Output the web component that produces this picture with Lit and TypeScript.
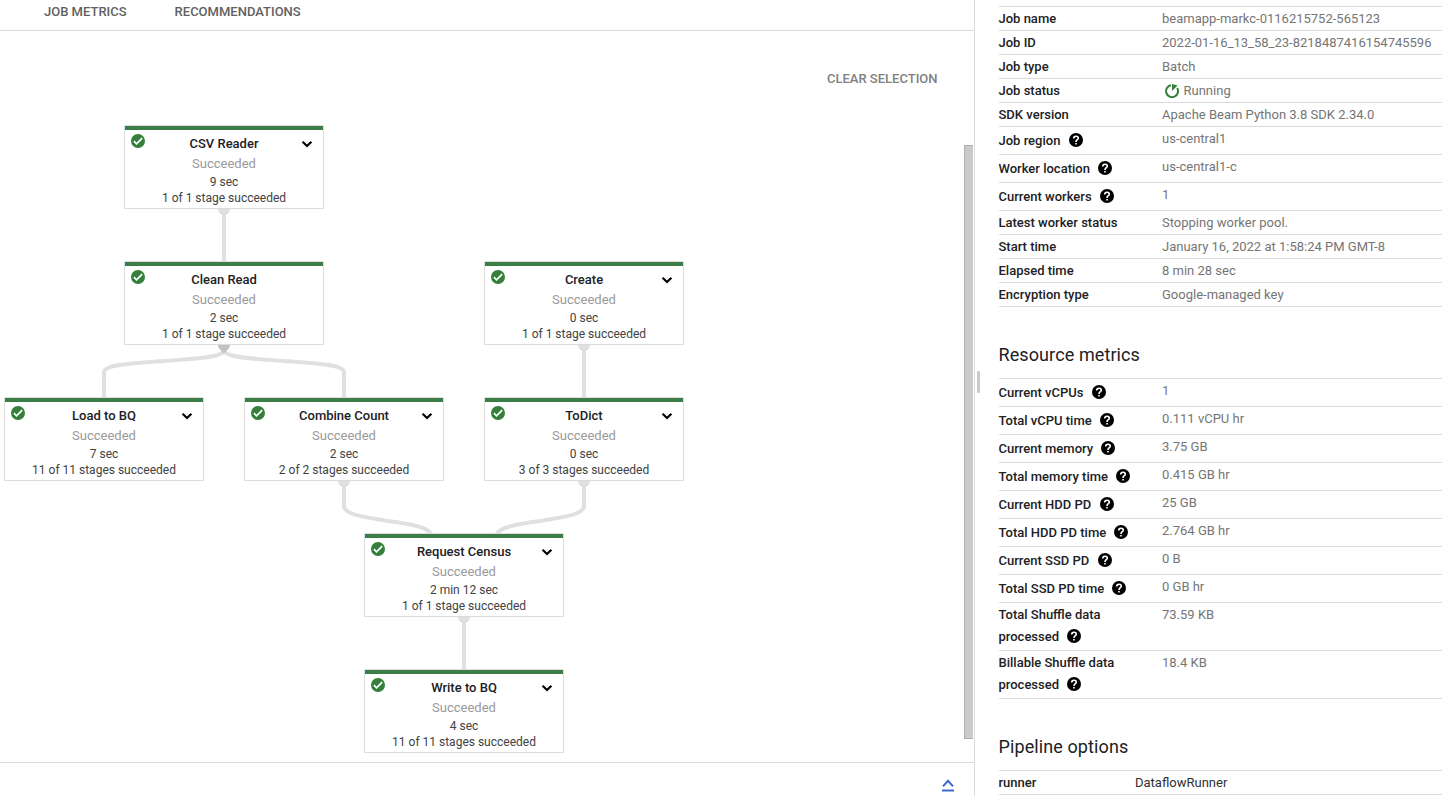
import { LitElement, html, css, svg, nothing } from "lit";
import { customElement, property } from "lit/decorators.js";

interface Step {
  x: number;
  y: number;
  name: string;
  time: string;
  stages: string;
  leaf?: boolean;
}

const STEPS: Step[] = [
  { x: 124, y: 94, name: "CSV Reader", time: "9 sec", stages: "1 of 1 stage succeeded" },
  { x: 124, y: 230, name: "Clean Read", time: "2 sec", stages: "1 of 1 stage succeeded", leaf: true },
  { x: 484, y: 230, name: "Create", time: "0 sec", stages: "1 of 1 stage succeeded" },
  { x: 4, y: 366, name: "Load to BQ", time: "7 sec", stages: "11 of 11 stages succeeded" },
  { x: 244, y: 366, name: "Combine Count", time: "2 sec", stages: "2 of 2 stages succeeded" },
  { x: 484, y: 366, name: "ToDict", time: "0 sec", stages: "3 of 3 stages succeeded" },
  { x: 364, y: 502, name: "Request Census", time: "2 min 12 sec", stages: "1 of 1 stage succeeded" },
  { x: 364, y: 638, name: "Write to BQ", time: "4 sec", stages: "11 of 11 stages succeeded" },
];

const EDGES = [
  "M224 178V230",
  "M584 314V366",
  "M464 586V638",
  "M224 319C224 327 189 328 164 330C139 332 104 333 104 341V366",
  "M224 319C224 327 259 328 284 330C309 332 344 333 344 341V366",
  "M344 450V475C344 484 366 486 388 490C410 493 428 496 431 503",
  "M584 450V475C584 484 562 486 540 490C518 493 500 496 497 503",
];

const PORTS = [
  [224, 178],
  [584, 314],
  [344, 450],
  [584, 450],
  [464, 586],
];

interface Info {
  label: string;
  value: string;
  help?: boolean;
  running?: boolean;
}

const JOB: Info[] = [
  { label: "Job name", value: "beamapp-markc-0116215752-565123" },
  { label: "Job ID", value: "2022-01-16_13_58_23-8218487416154745596" },
  { label: "Job type", value: "Batch" },
  { label: "Job status", value: "Running", running: true },
  { label: "SDK version", value: "Apache Beam Python 3.8 SDK 2.34.0" },
  { label: "Job region", value: "us-central1", help: true },
  { label: "Worker location", value: "us-central1-c", help: true },
  { label: "Current workers", value: "1", help: true },
  { label: "Latest worker status", value: "Stopping worker pool." },
  { label: "Start time", value: "January 16, 2022 at 1:58:24 PM GMT-8" },
  { label: "Elapsed time", value: "8 min 28 sec" },
  { label: "Encryption type", value: "Google-managed key" },
];

const RESOURCES: Info[] = [
  { label: "Current vCPUs", value: "1", help: true },
  { label: "Total vCPU time", value: "0.111 vCPU hr", help: true },
  { label: "Current memory", value: "3.75 GB", help: true },
  { label: "Total memory time", value: "0.415 GB hr", help: true },
  { label: "Current HDD PD", value: "25 GB", help: true },
  { label: "Total HDD PD time", value: "2.764 GB hr", help: true },
  { label: "Current SSD PD", value: "0 B", help: true },
  { label: "Total SSD PD time", value: "0 GB hr", help: true },
  { label: "Total Shuffle data processed", value: "73.59 KB", help: true },
  { label: "Billable Shuffle data processed", value: "18.4 KB", help: true },
];

@customElement("pipeline-step")
class PipelineStep extends LitElement {
  @property({ attribute: false }) step!: Step;

  static styles = css`
    :host {
      display: block;
      box-sizing: border-box;
      width: 200px;
      height: 84px;
      border: 1px solid #dcdcdc;
      background: #fff;
      text-align: center;
    }
    .band {
      height: 4px;
      background: #3a7f46;
    }
    .body {
      display: grid;
      grid-template-columns: 26px 1fr 26px;
      grid-template-rows: 22px 19px 17px 16px;
      padding-top: 2px;
      align-items: center;
    }
    .check {
      width: 14px;
      height: 14px;
      justify-self: start;
      margin-left: 6px;
      margin-top: -5px;
    }
    .chevron {
      width: 12px;
      height: 8px;
      justify-self: start;
      margin-left: 4px;
      margin-top: 2px;
    }
    .name {
      grid-column: 2;
      font-size: 13px;
      font-weight: 500;
      color: #202124;
    }
    .state,
    .line {
      grid-column: 1 / -1;
    }
    .state {
      font-size: 13px;
      color: #9a9a9a;
    }
    .line {
      font-size: 12px;
      color: #424242;
    }
  `;

  render() {
    const s = this.step;
    return html`
      <div class="band"></div>
      <div class="body">
        <svg class="check" viewBox="0 0 14 14">
          <circle cx="7" cy="7" r="7" fill="#36803c" />
          <path d="M2.900 7.200L5.600 9.900L11.200 4.200" fill="none" stroke="#fff" stroke-width="1.700" />
        </svg>
        <div class="name">${s.name}</div>
        ${s.leaf
          ? nothing
          : html`<svg class="chevron" viewBox="0 0 12 8">
              <path d="M1.600 1.800L6 6L10.400 1.800" fill="none" stroke="#000" stroke-width="2.200" />
            </svg>`}
        <div class="state">Succeeded</div>
        <div class="line">${s.time}</div>
        <div class="line">${s.stages}</div>
      </div>
    `;
  }
}

@customElement("info-table")
class InfoTable extends LitElement {
  @property({ attribute: false }) rows: Info[] = [];

  static styles = css`
    :host {
      display: block;
      border-top: 1px solid #dcdcdc;
      font-size: 13px;
    }
    .row {
      display: grid;
      grid-template-columns: 163.5px 1fr;
      border-bottom: 1px solid #dcdcdc;
      line-height: 23px;
    }
    .label {
      font-weight: 500;
      color: #202124;
      padding-right: 20px;
    }
    .label.tall {
      line-height: 22px;
      padding-top: 3px;
      padding-bottom: 2px;
    }
    .label.wrap {
      padding-top: 1px;
      padding-bottom: 2px;
    }
    .value {
      color: #757575;
      white-space: nowrap;
    }
    .help {
      width: 14px;
      height: 14px;
      margin-left: 5px;
      vertical-align: -2px;
    }
    .spin {
      width: 14px;
      height: 14px;
      margin: 0 5px 0 2.5px;
      vertical-align: -3px;
    }
  `;

  render() {
    return this.rows.map(
      (r) => html`
        <div class="row">
          <div class="label ${r.help ? "tall" : ""} ${r.label.includes("Shuffle") ? "wrap" : ""}">
            ${r.label}${r.help
              ? html` <svg class="help" viewBox="0 0 14 14">
                  <circle cx="7" cy="7" r="7" fill="#000" />
                  <path
                    d="M4.700 5.500C4.700 3.900 5.600 3.200 7 3.200C8.400 3.200 9.300 4 9.300 5.200C9.300 6.700 7 6.800 7 8.900"
                    fill="none"
                    stroke="#fff"
                    stroke-width="1.600"
                  />
                  <path d="M6.200 10H7.800V11.600H6.200Z" fill="#fff" />
                </svg>`
              : nothing}
          </div>
          <div class="value">
            ${r.running
              ? html`<svg class="spin" viewBox="0 0 14 14">
                  <path d="M6 1.200A6 6 0 1 0 12.200 4" fill="none" stroke="#36803c" stroke-width="2" />
                  <path d="M7 0L12.600 1.400L7 7Z" fill="#36803c" />
                </svg>`
              : nothing}${r.value}
          </div>
        </div>
      `
    );
  }
}

@customElement("app-root")
class AppRoot extends LitElement {
  static styles = css`
    :host {
      display: grid;
      grid-template-columns: 974px 1fr;
      height: 796px;
      overflow: hidden;
      background: #fff;
      font-family: Roboto, "Liberation Sans", sans-serif;
    }
    .main {
      display: grid;
      grid-template-rows: 31px 731px 34px;
      min-width: 0;
    }
    .tabs {
      display: flex;
      gap: 48px;
      padding-left: 44px;
      border-bottom: 1px solid #dcdcdc;
      font-size: 13px;
      font-weight: 500;
      line-height: 24px;
      color: #616161;
    }
    .graph {
      position: relative;
    }
    .edges {
      display: block;
      width: 960px;
      height: 731px;
    }
    .node {
      position: absolute;
    }
    .clear {
      position: absolute;
      top: 36px;
      right: 36.5px;
      font-size: 13px;
      font-weight: 500;
      line-height: 24px;
      color: #808080;
    }
    .scroll {
      position: absolute;
      box-sizing: border-box;
      top: 114px;
      right: 1px;
      width: 9px;
      height: 594px;
      background: #cacaca;
      border: 1px solid #b0b0b0;
      border-right: 0;
    }
    .foot {
      display: flex;
      justify-content: flex-end;
      align-items: flex-start;
      border-top: 1px solid #dcdcdc;
      padding: 15px 20px 0 0;
    }
    .expand {
      width: 12px;
      height: 14px;
    }
    .side {
      display: flex;
      border-left: 1px solid #dcdcdc;
      min-width: 0;
    }
    .grip {
      flex: none;
      width: 3px;
      height: 22px;
      margin: 371px 18.5px 0 2px;
      border-radius: 1px;
      background: #cacaca;
    }
    .details {
      flex: 1;
      min-width: 0;
      padding-top: 6px;
    }
    .heading {
      margin: 0;
      padding: 35px 0 11px;
      font-size: 18px;
      font-weight: 400;
      letter-spacing: 0.1px;
      line-height: 25px;
      color: #202124;
    }
    .options {
      display: grid;
      grid-template-columns: 136.5px 1fr;
      border: solid #dcdcdc;
      border-width: 1px 0;
      font-size: 13px;
      line-height: 23px;
      color: #303030;
    }
    .key {
      font-weight: 500;
      color: #202124;
    }
  `;

  render() {
    return html`
      <div class="main">
        <div class="tabs"><span>JOB METRICS</span><span>RECOMMENDATIONS</span></div>
        <div class="graph">
          <svg class="edges" viewBox="0 0 960 731">
            ${EDGES.map((d) => svg`<path d=${d} fill="none" stroke="#e0e0e0" stroke-width="4" />`)}
            ${PORTS.map(([x, y]) => svg`<circle cx=${x} cy=${y} r="6" fill="#e0e0e0" />`)}
            <path d="M218 314C218 318 221 318.500 224 323C227 318.500 230 318 230 314Z" fill="#c2c2c2" />
          </svg>
          ${STEPS.map(
            (s) => html`<pipeline-step class="node" style="left:${s.x}px;top:${s.y}px" .step=${s}></pipeline-step>`
          )}
          <div class="clear">CLEAR SELECTION</div>
          <div class="scroll"></div>
        </div>
        <div class="foot">
          <svg class="expand" viewBox="0 0 12 14">
            <path d="M1 8.300L6 2.800L11 8.300M0 12.500H12" fill="none" stroke="#3f69d2" stroke-width="2" />
          </svg>
        </div>
      </div>
      <div class="side">
        <div class="grip"></div>
        <div class="details">
          <info-table .rows=${JOB}></info-table>
          <h2 class="heading">Resource metrics</h2>
          <info-table .rows=${RESOURCES}></info-table>
          <h2 class="heading">Pipeline options</h2>
          <div class="options"><span class="key">runner</span><span>DataflowRunner</span></div>
        </div>
      </div>
    `;
  }
}
